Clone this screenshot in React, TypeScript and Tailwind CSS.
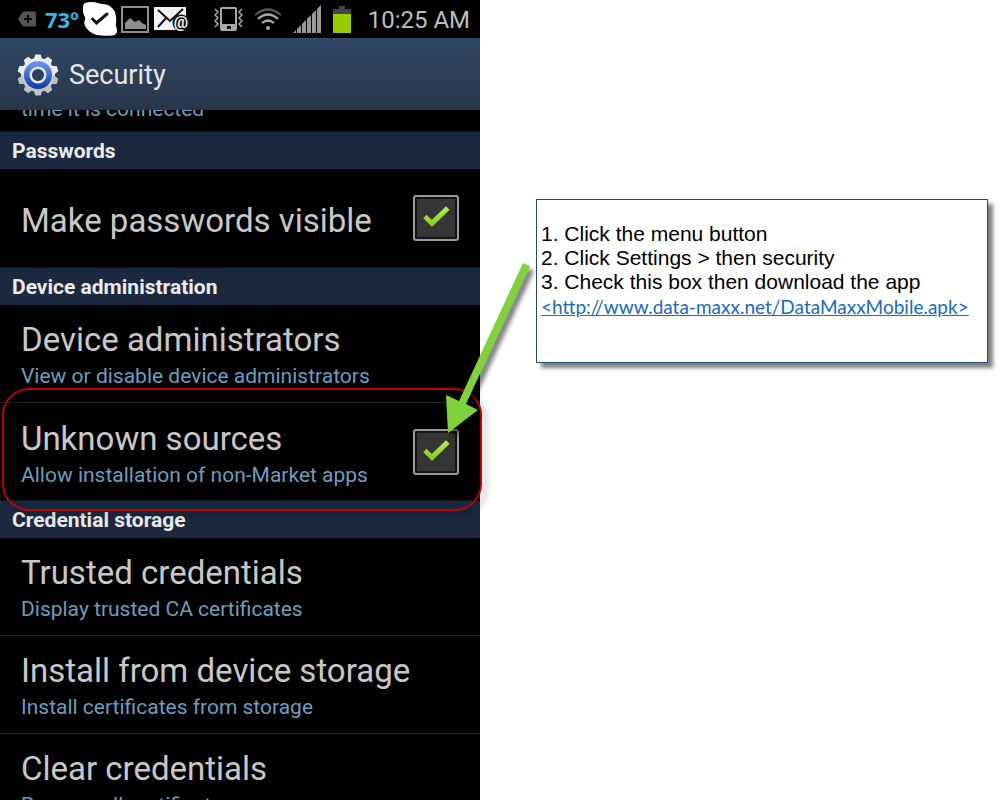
import { ReactNode } from "react";

function SectionHeader({ children }: { children: ReactNode }) {
  return (
    <h2 className="h-[38px] border-t border-[#0f1722] bg-[#1a2940] px-3 text-[21px] leading-[38px] font-bold text-[#ececec]">
      {children}
    </h2>
  );
}

function RowText({ title, summary }: { title: string; summary?: string }) {
  return (
    <span className="block min-w-0 pt-[5px] whitespace-nowrap">
      <span className="block text-[33px] leading-[40px] text-[#c8c8c8]">{title}</span>
      {summary && <span className="block text-[21px] leading-[32px] text-[#6e9dbf]">{summary}</span>}
    </span>
  );
}

function LinkRow({ title, summary, last }: { title: string; summary: string; last?: boolean }) {
  return (
    <button
      type="button"
      className={`flex h-[98px] w-full items-center border-b pr-5 pl-[21px] text-left ${
        last ? "border-black" : "border-[#262626]"
      }`}
    >
      <RowText title={title} summary={summary} />
    </button>
  );
}

function CheckRow({ title, summary }: { title: string; summary?: string }) {
  return (
    <label className="flex h-[98px] cursor-pointer items-center justify-between pr-[21px] pl-[21px]">
      <RowText title={title} summary={summary} />
      <span className="relative block size-[46px] shrink-0">
        <input
          type="checkbox"
          defaultChecked
          className="peer block size-full appearance-none rounded-[3px] border-2 border-[#999] bg-[#353535] shadow-[inset_0_0_0_2px_#151515]"
        />
        <svg viewBox="0 0 46 46" className="pointer-events-none absolute inset-0 hidden peer-checked:block">
          <defs>
            <linearGradient id="tick" x1="0" y1="0" x2="0" y2="1">
              <stop offset="0" stopColor="#b4ee55" />
              <stop offset="1" stopColor="#7ccb1c" />
            </linearGradient>
          </defs>
          <path
            d="M10 23.300 13.500 19.500l5.300 5L33 11l4 3.700L19 32.300Z"
            fill="url(#tick)"
            stroke="#222"
            strokeWidth="0.500"
          />
        </svg>
      </span>
    </label>
  );
}

function StatusBar() {
  return (
    <div className="flex h-[38px] items-center justify-between bg-black pr-[10px] pl-[18px]">
      <div className="flex items-center gap-1">
        <svg width="18" height="16" viewBox="0 0 18 16">
          <path d="M0 8 5 .5h11.500Q18 .5 18 2v12q0 1.500-1.500 1.500H5Z" fill="#555" />
          <path d="M10 4v8M6 8h8" stroke="#000" strokeWidth="2" />
        </svg>
        <span className="ml-[5px] font-['Open_Sans',sans-serif] text-[22px] font-bold text-[#33b5e5]">73º</span>
        <svg width="34" height="34" viewBox="0 0 34 34">
          <path
            d="M2 1Q8-1 15 1q2 1 4 1 6 0 9 3 4 3 4.700 8 1 5 0 10 2 5 1 8-2 3-5 2.500-5 .5-10 0-7 0-12-4-5-4-5.500-9 1-3 1-5Q-1 10 0 6 0 2 2 1Z"
            fill="#fff"
          />
          <path d="m9.500 17 4 4L24 12" fill="none" stroke="#111" strokeWidth="3" strokeLinecap="round" />
        </svg>
        <svg width="28" height="27" viewBox="0 0 28 27">
          <rect x="1" y="1" width="26" height="25" fill="none" stroke="#8e8e8e" strokeWidth="2" />
          <path d="M4 23v-6l5-5 5 4 4-2 3 3 4 2v4Z" fill="#8e8e8e" />
        </svg>
        <svg width="35" height="26" viewBox="0 0 35 26" className="ml-px">
          <rect y="1" width="32" height="23" fill="#f2f2f2" />
          <path d="m4 4 12 11L29 3M4 21l8-9" fill="none" stroke="#111" strokeWidth="2" />
          <circle cx="27" cy="17" r="8.500" fill="#111" />
          <text x="27" y="22" textAnchor="middle" fontSize="16" fontWeight="bold" fill="#f2f2f2">
            @
          </text>
        </svg>
      </div>
      <div className="flex items-center gap-[11px]">
        <svg width="29" height="24" viewBox="0 0 29 24">
          <rect x="7" y="1" width="15" height="22" rx="1" fill="#000" stroke="#aaa" strokeWidth="2" />
          <path d="M7 17h15v6H7Z" fill="#aaa" />
          <rect x="13" y="19" width="4" height="3" fill="#111" />
          <path
            d="m1 2 3 3-3 3 3 3-3 3 3 3-3 3M28 2l-3 3 3 3-3 3 3 3-3 3 3 3"
            fill="none"
            stroke="#aaa"
            strokeWidth="1.500"
          />
        </svg>
        <svg width="28" height="22" viewBox="0 0 28 22" fill="none" strokeWidth="2.200">
          <path d="M1 7q13-11 26 0" stroke="#555" />
          <path d="M4 11q10-9 20 0M8 15q6-5 12 0" stroke="#aaa" />
          <circle cx="14" cy="20" r="2" fill="#aaa" />
        </svg>
        <svg width="28" height="28" viewBox="0 0 28 28" fill="#999">
          <path d="M0 28l3-3v3ZM4 24l4-4v8H4ZM9 19l4-4v13H9ZM14 14l4-4v18h-4ZM19 9l4-4v23h-4ZM24 4l4-4v28h-4Z" />
        </svg>
        <svg width="20" height="27" viewBox="0 0 20 27">
          <path d="M7 0h6v3h6v5H1V3h6Z" fill="#444" />
          <path d="M1 8h18v19H1Z" fill="#99cc00" />
        </svg>
        <time className="ml-[5px] pt-[2px] text-[24px] text-[#bebebe]">10:25 AM</time>
      </div>
    </div>
  );
}

function GearIcon() {
  const teeth = Array.from({ length: 10 }, (_, i) => i * 36);
  return (
    <svg width="42" height="42" viewBox="-21 -21 42 42" className="shrink-0">
      <defs>
        <linearGradient id="metal" x1="0" y1="-20" x2="0" y2="20" gradientUnits="userSpaceOnUse">
          <stop offset="0" stopColor="#fff" />
          <stop offset="1" stopColor="#b5b5b5" />
        </linearGradient>
        <linearGradient id="blue" x1="0" y1="0" x2="0" y2="1">
          <stop offset="0" stopColor="#7496fa" />
          <stop offset="1" stopColor="#0b3c9c" />
        </linearGradient>
      </defs>
      <circle r="17" fill="url(#metal)" />
      {teeth.map((a) => (
        <path
          key={a}
          d="M-4.500-15-2.700-20.500h5.400l1.800 5.500Z"
          transform={`rotate(${a})`}
          fill={Math.cos((a * Math.PI) / 180) < -0.3 ? "#c2c2c2" : "#ececec"}
        />
      ))}
      <circle r="14" fill="url(#blue)" />
      <circle r="7.300" fill="#2b405a" stroke="#e4e4e4" strokeWidth="2.500" />
    </svg>
  );
}

function Arrow() {
  return (
    <svg
      width="100"
      height="190"
      viewBox="0 0 100 190"
      className="pointer-events-none absolute top-[-148px] right-[-60px] drop-shadow-[4px_5px_2px_rgba(0,0,0,0.5)]"
    >
      <path d="M83 8l7 3-64 138 12 6-30 23-2-38 13 6Z" fill="#80d23c" />
    </svg>
  );
}

export default function App() {
  return (
    <main className="flex h-screen items-start overflow-hidden bg-white">
      <section className="max-w-[480px] min-w-0 flex-1 self-stretch bg-black font-[Roboto,sans-serif]">
        <StatusBar />
        <header className="flex h-[72px] items-center gap-[10px] bg-linear-to-b from-[#304763] to-[#26374b] pt-[2px] pl-[17px]">
          <GearIcon />
          <h1 className="text-[27px] text-[#e6e6e6]">Security</h1>
        </header>
        <div className="flex h-[21px] items-end overflow-hidden pl-[21px]">
          <p className="pb-[6px] text-[21px] leading-[32px] text-[#6e9dbf]">time it is connected</p>
        </div>

        <SectionHeader>Passwords</SectionHeader>
        <CheckRow title="Make passwords visible" />

        <SectionHeader>Device administration</SectionHeader>
        <LinkRow title="Device administrators" summary="View or disable device administrators" />
        <div className="relative -mb-px">
          <CheckRow title="Unknown sources" summary="Allow installation of non-Market apps" />
          <div className="pointer-events-none absolute top-[-15px] right-[-2px] bottom-[-10px] left-[2px] rounded-[27px] border-2 border-[#c00000] drop-shadow-[4px_4px_3px_rgba(0,0,0,0.4)]" />
          <Arrow />
        </div>

        <SectionHeader>Credential storage</SectionHeader>
        <LinkRow title="Trusted credentials" summary="Display trusted CA certificates" />
        <LinkRow title="Install from device storage" summary="Install certificates from storage" />
        <LinkRow title="Clear credentials" summary="Remove all certificates" last />
      </section>

      <aside className="mt-[199px] mr-[18px] ml-14 max-w-[452px] min-w-0 flex-1 border border-[#1f497d] bg-white px-1 pt-[22px] pb-[42px] font-['Liberation_Sans',Arial,sans-serif] text-[21px] leading-6 text-black shadow-[5px_5px_4px_rgba(0,0,0,0.5)]">
        <p>1. Click the menu button</p>
        <p>2. Click Settings &gt; then security</p>
        <p>3. Check this box then download the app</p>
        <a
          href="http://www.data-maxx.net/DataMaxxMobile.apk"
          className="block font-[Lato,sans-serif] text-[19px] leading-[26px] whitespace-nowrap text-[#1769c4] underline"
        >
          &lt;http://www.data-maxx.net/DataMaxxMobile.apk&gt;
        </a>
      </aside>
    </main>
  );
}
